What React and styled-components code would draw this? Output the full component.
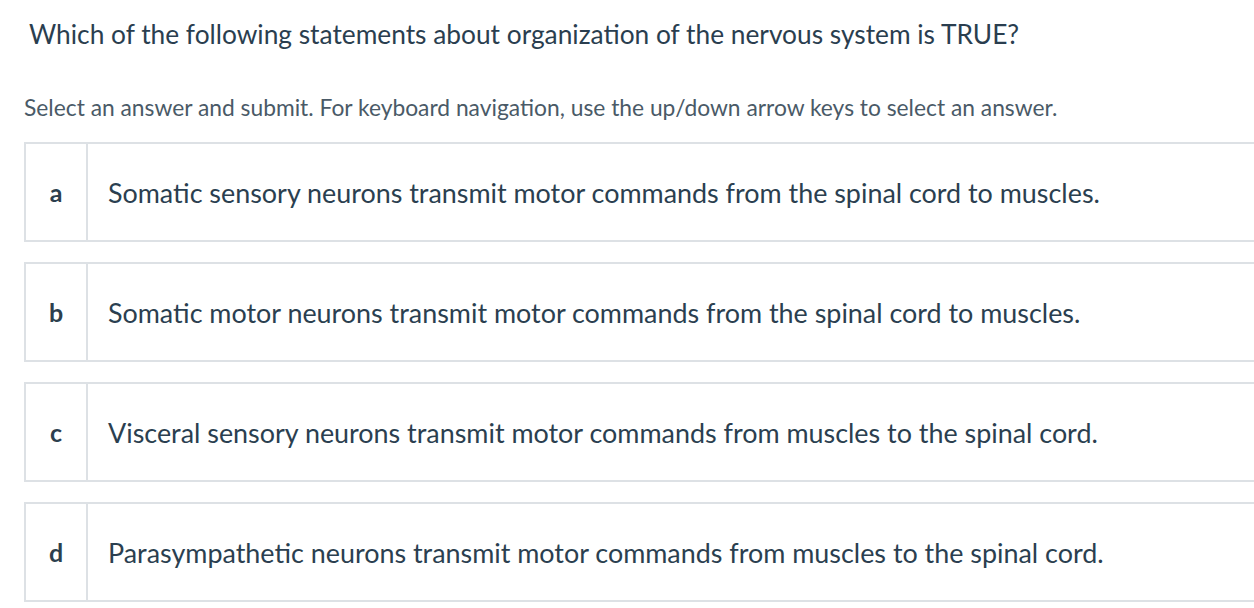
import React from 'react';
import styled, { createGlobalStyle } from 'styled-components';

const GlobalStyle = createGlobalStyle`
  html, body {
    margin: 0;
    padding: 0;
    background: #fff;
    overflow: hidden;
  }
  body {
    font-family: Lato, "Open Sans", sans-serif;
  }
`;

const Page = styled.main`
  padding: 14px 0 0 24px;
`;

const Question = styled.h1`
  margin: 0 0 0 5px;
  font-size: 26.3px;
  line-height: 40px;
  font-weight: 400;
  color: #2a3e4f;
`;

const Hint = styled.p`
  margin: 39px 0 0 0;
  font-size: 22.8px;
  line-height: 28px;
  color: #4a5a67;
`;

const Options = styled.ol`
  list-style: none;
  margin: 21px 0 0 0;
  padding: 0;
  display: flex;
  flex-direction: column;
  gap: 20px;
`;

const Option = styled.li`
  display: flex;
  height: 100px;
  box-sizing: border-box;
  border: 2px solid #dde1e5;
  border-right: none;
`;

const Letter = styled.span`
  width: 60px;
  flex: none;
  display: flex;
  align-items: center;
  justify-content: center;
  border-right: 2px solid #dde1e5;
  font-size: 25px;
  font-weight: 700;
  color: #2d3f4e;
`;

const Text = styled.span`
  display: flex;
  align-items: center;
  padding-left: 20px;
  font-size: 26.9px;
  color: #2b3f50;
  white-space: nowrap;
`;

const answers = [
  ['a', 'Somatic sensory neurons transmit motor commands from the spinal cord to muscles.'],
  ['b', 'Somatic motor neurons transmit motor commands from the spinal cord to muscles.'],
  ['c', 'Visceral sensory neurons transmit motor commands from muscles to the spinal cord.'],
  ['d', 'Parasympathetic neurons transmit motor commands from muscles to the spinal cord.'],
];

export default function App() {
  return (
    <>
      <GlobalStyle />
      <Page>
        <Question>Which of the following statements about organization of the nervous system is TRUE?</Question>
        <Hint>Select an answer and submit. For keyboard navigation, use the up/down arrow keys to select an answer.</Hint>
        <Options>
          {answers.map(([key, label]) => (
            <Option key={key}>
              <Letter>{key}</Letter>
              <Text>{label}</Text>
            </Option>
          ))}
        </Options>
      </Page>
    </>
  );
}
